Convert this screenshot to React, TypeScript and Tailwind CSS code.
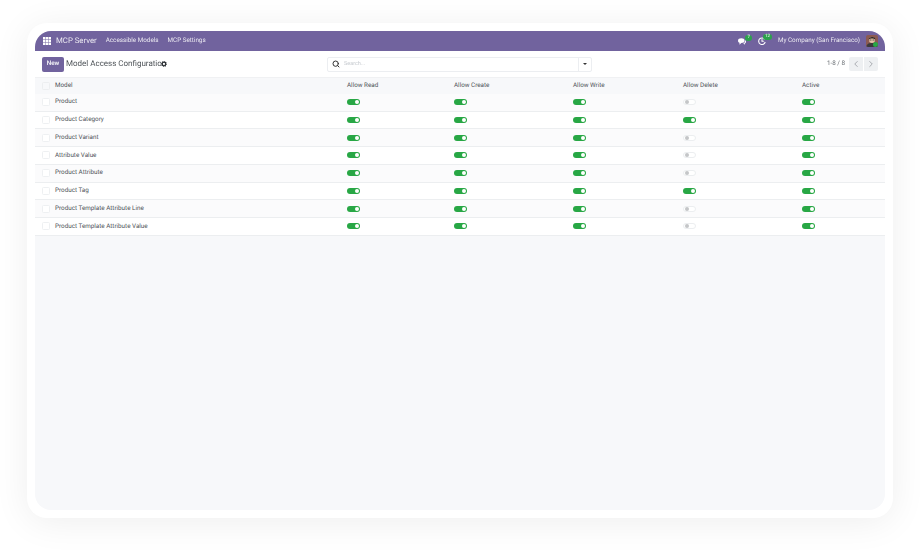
import { ChevronLeft, ChevronRight, Search } from 'lucide-react';

const rows = [
  { name: 'Product', del: false },
  { name: 'Product Category', del: true },
  { name: 'Product Variant', del: false },
  { name: 'Attribute Value', del: false },
  { name: 'Product Attribute', del: false },
  { name: 'Product Tag', del: true },
  { name: 'Product Template Attribute Line', del: false },
  { name: 'Product Template Attribute Value', del: false },
];

const gridCols = 'grid grid-cols-[312px_107px_119px_110px_119px_1fr] items-center';

function Toggle({ on }: { on: boolean }) {
  if (on) {
    return (
      <div className="flex h-[6px] w-[13px] items-center justify-end rounded-full bg-[#28a745] pr-[1px]">
        <div className="h-[4px] w-[4px] rounded-full bg-white" />
      </div>
    );
  }
  return (
    <div className="flex h-[6px] w-[13px] items-center rounded-full border border-[#eceef0] bg-white pl-[1px]">
      <div className="h-[4px] w-[4px] rounded-full bg-[#c4c6c8]" />
    </div>
  );
}

function Check() {
  return <div className="h-[8px] w-[8px] rounded-[1.5px] border border-[#eef0f2] bg-white" />;
}

function Badge({ children }: { children: string }) {
  return (
    <span className="absolute -right-[6px] -top-[3px] rounded-full bg-[#2ca24c] px-[2px] text-[4.5px] leading-[6px] text-white">
      {children}
    </span>
  );
}

function Row({ name, del }: { name: string; del: boolean }) {
  return (
    <div className={`${gridCols} h-[17.75px] border-b border-[#eceef0] bg-white even:bg-[#fbfbfc]`}>
      <div className="flex items-center gap-[5px] pl-[7px]">
        <Check />
        <span>{name}</span>
      </div>
      <Toggle on />
      <Toggle on />
      <Toggle on />
      <Toggle on={del} />
      <Toggle on />
    </div>
  );
}

export default function App() {
  return (
    <div className="h-[550px] w-[920px] bg-white p-[23px_27px_32px_27px] font-['Roboto',sans-serif] text-[6.3px] text-[#4f5459] [text-rendering:geometricPrecision]">
      <div className="h-[495px] w-[866px] rounded-[20px] bg-white p-[8px] shadow-[0_4px_36px_rgba(0,0,0,0.07)]">
        <div className="flex h-[479px] w-[850px] flex-col overflow-hidden rounded-[16px] bg-[#f7f8fa] blur-[0.2px]">
          <div className="flex h-[20px] shrink-0 items-center bg-[#71639e] pl-[8px] pr-[7px] text-white/85">
            <svg width="8" height="8" viewBox="0 0 8 8" fill="white">
              <rect x="0" y="0" width="2.400" height="2.400" />
              <rect x="2.800" y="0" width="2.400" height="2.400" />
              <rect x="5.600" y="0" width="2.400" height="2.400" />
              <rect x="0" y="2.800" width="2.400" height="2.400" />
              <rect x="2.800" y="2.800" width="2.400" height="2.400" />
              <rect x="5.600" y="2.800" width="2.400" height="2.400" />
              <rect x="0" y="5.600" width="2.400" height="2.400" />
              <rect x="2.800" y="5.600" width="2.400" height="2.400" />
              <rect x="5.600" y="5.600" width="2.400" height="2.400" />
            </svg>
            <span className="ml-[5px] text-[7.8px]">MCP Server</span>
            <span className="ml-[9px]">Accessible Models</span>
            <span className="ml-[9px]">MCP Settings</span>
            <div className="ml-auto flex items-center">
              <div className="relative mr-[12px]">
                <svg width="8" height="7" viewBox="0 0 8 7" fill="white">
                  <path d="M0 2.800 C0 1 1.500 .3 3.300 .3 C5.200 .3 6.600 1 6.600 2.800 C6.600 4.300 5.200 5 3.300 5 L1.500 6.700 L1.500 4.800 C.5 4.500 0 3.800 0 2.800Z" />
                  <path d="M7 2 C7.800 2.500 8 3.200 8 3.800 C8 4.800 7.400 5.300 6.800 5.500 L6.800 6.700 L5.300 5.500 C6.500 5.200 7.200 4 7 2Z" />
                </svg>
                <Badge>7</Badge>
              </div>
              <div className="relative mr-[12px]">
                <svg className="block" width="8" height="8" viewBox="0 0 8 8" fill="none" stroke="white" strokeWidth="1.100">
                  <path d="M6.800 2.500 A3.300 3.300 0 1 0 7.200 5" />
                  <path d="M4 2.300 V4.300 H5.800" />
                </svg>
                <Badge>12</Badge>
              </div>
              <span>My Company (San Francisco)</span>
              <div className="relative ml-[6px] h-[12px] w-[12px] overflow-hidden rounded-[2px] bg-[#8b5a52]">
                <svg className="block" width="12" height="12" viewBox="0 0 12 12">
                  <path d="M0 12 C1 8.500 3 8 6 8 C9 8 11 8.500 12 12Z" fill="#3b3a3a" />
                  <circle cx="6" cy="5" r="3" fill="#e5c4a8" />
                  <path d="M2.700 4.500 C2.500 1.500 9.500 1 9.300 4.500 C8 3.200 4 3.200 2.700 4.500Z" fill="#2a2320" />
                  <path d="M3.500 5 H5.500 M6.500 5 H8.500" stroke="#222" strokeWidth="0.7" />
                </svg>
                <div className="absolute bottom-0 right-0 h-[5px] w-[5px] rounded-full bg-[#28a745]" />
              </div>
            </div>
          </div>

          <div className="flex h-[26px] shrink-0 items-center bg-white pl-[7px] pr-[7px]">
            <div className="flex h-[15px] w-[22px] items-center justify-center rounded-[2px] bg-[#71639e] font-medium text-white">
              New
            </div>
            <span className="ml-[2px] w-[92px] whitespace-nowrap text-[8px] text-[#4f5459]">Model Access Configuration</span>
            <svg className="ml-[3px]" width="6" height="6" viewBox="0 0 6 6">
              <circle cx="3" cy="3" r="1.800" fill="none" stroke="#2f3338" strokeWidth="1.300" />
              <circle cx="3" cy="3" r="2.700" fill="none" stroke="#2f3338" strokeWidth="0.800" strokeDasharray="1 1.100" />
            </svg>
            <div className="ml-[160px] flex h-[15px] w-[265px] items-center rounded-[2px] border border-[#eceef1] bg-white">
              <Search className="ml-[4px] h-[8px] w-[8px] text-[#333]" strokeWidth={3} />
              <span className="ml-[4px] flex-1 text-[5.5px] text-[#c6cacf]">Search...</span>
              <div className="flex h-full w-[13px] items-center justify-center border-l border-[#eceef1]">
                <div className="h-0 w-0 border-x-[2px] border-t-[2.500px] border-x-transparent border-t-[#333]" />
              </div>
            </div>
            <div className="ml-auto flex items-center">
              <span className="mr-[4px] text-[#666b70]">1-8 / 8</span>
              <div className="flex h-[14px] items-center gap-[1px]">
                <div className="flex h-full w-[14px] items-center justify-center rounded-l-[2px] bg-[#eef0f2]">
                  <ChevronLeft className="h-[10px] w-[10px] text-[#9a9ea3]" />
                </div>
                <div className="flex h-full w-[14px] items-center justify-center rounded-r-[2px] bg-[#eef0f2]">
                  <ChevronRight className="h-[10px] w-[10px] text-[#9a9ea3]" />
                </div>
              </div>
            </div>
          </div>

          <div className={`${gridCols} h-[16.75px] shrink-0 border-t border-[#f0f1f3] bg-[#f7f8fa]`}>
            <div className="flex items-center gap-[5px] pl-[7px]">
              <div className="h-[8px] w-[8px] rounded-[1.5px] border border-[#eceef0] bg-[#f7f8fa]" />
              <span>Model</span>
            </div>
            <span>Allow Read</span>
            <span>Allow Create</span>
            <span>Allow Write</span>
            <span>Allow Delete</span>
            <span>Active</span>
          </div>

          {rows.map((r) => (
            <Row key={r.name} name={r.name} del={r.del} />
          ))}
        </div>
      </div>
    </div>
  );
}
